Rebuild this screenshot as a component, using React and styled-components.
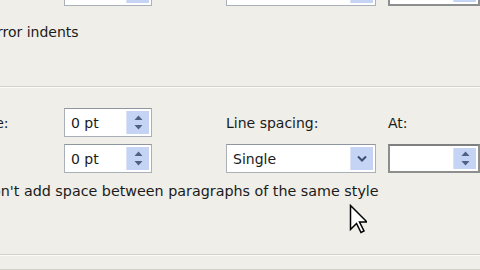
import React from "react";
import styled, { createGlobalStyle } from "styled-components";

const Global = createGlobalStyle`
  html, body {
    margin: 0;
    padding: 0;
    background: #efeee8;
    overflow: hidden;
  }
`;

const Viewport = styled.div`
  position: relative;
  width: 480px;
  height: 270px;
  overflow: hidden;
  background: #efeee8;
  font-family: "DejaVu Sans", "Liberation Sans", sans-serif;
  font-size: 14px;
  color: #1b1b1b;
`;

// the dialog runs on past the left edge of the shot
const Dialog = styled.div`
  margin-left: -60px;
  width: 560px;
`;

const Grid = styled.div`
  display: grid;
  grid-template-columns: 124px 88px 74px 150px 12px 92px;
  row-gap: ${(p) => p.gap || 0}px;
  margin-top: ${(p) => p.top || 0}px;
  align-items: center;
`;

const Label = styled.span`
  grid-column: ${(p) => p.col};
  white-space: nowrap;
  line-height: 16px;
  padding-left: ${(p) => p.indent || 0}px;
`;

const Field = styled.div`
  grid-column: ${(p) => p.col};
  height: 29px;
  box-sizing: border-box;
  display: flex;
  align-items: stretch;
  background: #fff;
  border: ${(p) => (p.dark ? "2px solid #8d8f8f" : "1px solid #a9b0b8")};
  border-top-color: ${(p) => (p.dark ? "#7d7f80" : "#8e959e")};
  padding: 2px;
`;

const Value = styled.div`
  flex: 1;
  display: flex;
  align-items: center;
  padding-left: 4px;
  white-space: nowrap;
`;

const Button = styled.div`
  width: 22px;
  background: #c5d4f4;
  border-left: 1px solid #dbe4f7;
  display: flex;
  flex-direction: column;
  align-items: center;
  justify-content: center;
  gap: 3px;
`;

const CheckRow = styled.div`
  display: flex;
  align-items: center;
  gap: 8px;
  padding-left: ${(p) => p.indent}px;
  margin-top: ${(p) => p.top}px;
  line-height: 16px;
  white-space: nowrap;
  font-size: ${(p) => p.size || 14}px;
`;

const Box = styled.span`
  width: 13px;
  height: 13px;
  box-sizing: border-box;
  border: 1px solid #1c5180;
  background: #fff;
`;

const Rule = styled.div`
  height: 1px;
  background: #d2d2ca;
  border-bottom: 1px solid #fbfbf8;
  margin-top: ${(p) => p.top}px;
`;

const Cursor = styled.svg`
  position: absolute;
  left: 349px;
  top: 204px;
`;

const Up = () => (
  <svg width="9" height="6" viewBox="0 0 9 6">
    <path d="M4.5 0.5 L8.5 5 L0.5 5 Z" fill="#4d6185" />
  </svg>
);

const Down = () => (
  <svg width="9" height="6" viewBox="0 0 9 6">
    <path d="M0.5 1 L8.5 1 L4.5 5.5 Z" fill="#4d6185" />
  </svg>
);

const Chevron = () => (
  <svg width="10" height="7" viewBox="0 0 10 7">
    <path d="M1 1.5 L5 5.5 L9 1.5" stroke="#3b4e73" strokeWidth="2" fill="none" />
  </svg>
);

const Spin = ({ col, value, dark }) => (
  <Field col={col} dark={dark}>
    <Value>{value}</Value>
    <Button>
      <Up />
      <Down />
    </Button>
  </Field>
);

const Select = ({ col, value }) => (
  <Field col={col}>
    <Value>{value}</Value>
    <Button>
      <Chevron />
    </Button>
  </Field>
);

export default function App() {
  return (
    <Viewport>
      <Global />
      <Dialog>
        <Grid top={-23}>
          <Spin col={2} value="" />
          <Select col={4} value="" />
          <Spin col={6} value="" dark />
        </Grid>

        <CheckRow indent={20} top={18}>
          <Box />
          <span>Mirror indents</span>
        </CheckRow>

        <Rule top={46} />

        <Grid top={20} gap={7}>
          <Label col={1} indent={18}>Before:</Label>
          <Spin col={2} value="0 pt" />
          <Label col={4}>Line spacing:</Label>
          <Label col={6}>At:</Label>

          <Label col={1} indent={18}>After:</Label>
          <Spin col={2} value="0 pt" />
          <Select col={4} value="Single" />
          <Spin col={6} value="" dark />
        </Grid>

        <CheckRow indent={20} top={10} size={14.3}>
          <Box />
          <span>Don't add space between paragraphs of the same style</span>
        </CheckRow>

        <Rule top={55} />
        <Rule top={13} />
      </Dialog>

      <Cursor width="18" height="30" viewBox="0 0 12 20">
        <path
          d="M1 1 L1 17 L5 13 L8 19 L10 18 L7 12 L12 12 Z"
          fill="#fff"
          stroke="#000"
          strokeWidth="1"
          strokeLinejoin="miter"
        />
      </Cursor>
    </Viewport>
  );
}
